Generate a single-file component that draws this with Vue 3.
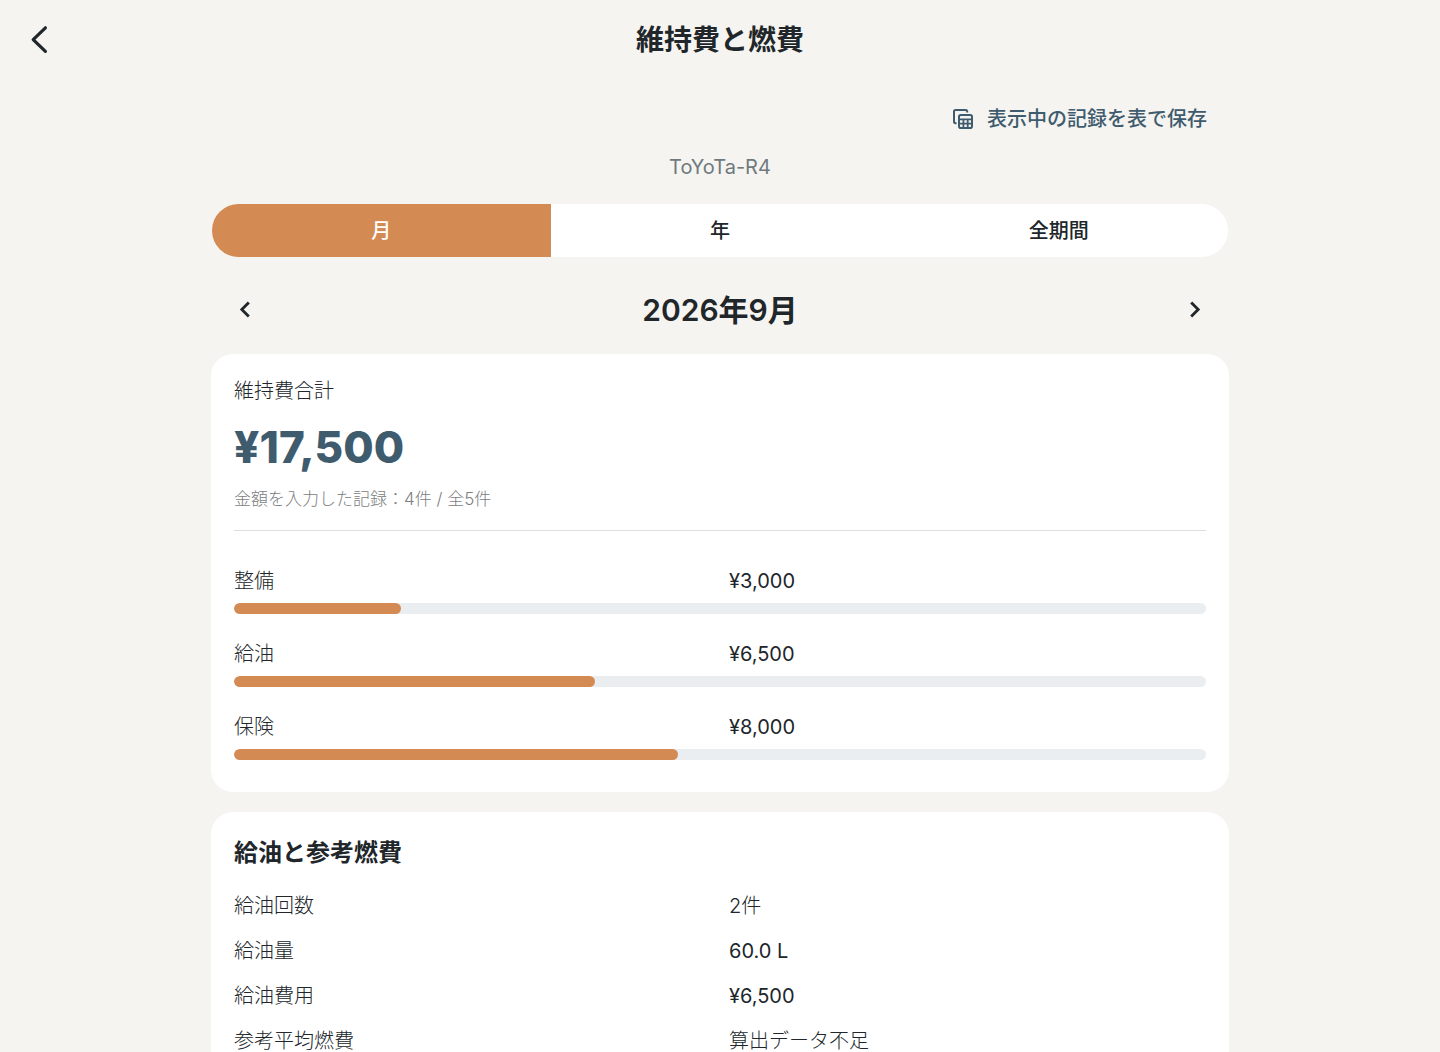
<script setup>
import { ref } from 'vue'

const period = ref('month')
const periods = [
  { id: 'month', label: '月' },
  { id: 'year', label: '年' },
  { id: 'all', label: '全期間' },
]

const total = 17500
const yen = (n) => '¥' + n.toLocaleString('en-US')

const categories = [
  { name: '整備', amount: 3000 },
  { name: '給油', amount: 6500 },
  { name: '保険', amount: 8000 },
]

const fuel = [
  { label: '給油回数', value: '2件' },
  { label: '給油量', value: '60.0 L', numeric: true },
  { label: '給油費用', value: '¥6,500', numeric: true },
  { label: '参考平均燃費', value: '算出データ不足' },
]
</script>

<template>
  <div class="page">
    <header class="bar">
      <button type="button" aria-label="戻る">
        <svg width="40" height="40" viewBox="0 0 40 40" fill="none" stroke="currentColor" stroke-width="3.2" stroke-linecap="round" stroke-linejoin="round">
          <path d="M25.4 7.8 13.2 19.6l12.2 11.8" />
        </svg>
      </button>
      <h1>維持費と燃費</h1>
    </header>

    <div class="scroll">
      <main>
        <div class="export-row">
          <button class="export" type="button">
            <svg width="20" height="20" viewBox="0 0 20 20" fill="none" stroke="currentColor" stroke-width="2" stroke-linejoin="round">
              <path d="M3.6 14.2H2.6Q1 14.2 1 12.6V2.6Q1 1 2.6 1H12.6Q14.2 1 14.2 2.6V3.6" />
              <rect x="6" y="6" width="13" height="13" rx="1.8" />
              <path d="M6 10.4h13M6 14.7h13M10.4 10.4V19M14.7 10.4V19" stroke-width="1.8" />
            </svg>
            <span>表示中の記録を表で保存</span>
          </button>
        </div>

        <p class="vehicle">ToYoTa-R4</p>

        <div class="segments" role="group" aria-label="期間">
          <button
            v-for="p in periods"
            :key="p.id"
            type="button"
            :class="{ active: period === p.id }"
            :aria-pressed="period === p.id"
            @click="period = p.id"
          >{{ p.label }}</button>
        </div>

        <div class="month">
          <button class="step" type="button" aria-label="前の月">
            <svg width="24" height="24" viewBox="0 0 24 24" fill="none" stroke="currentColor" stroke-width="2.8">
              <path d="M15.8 4.6 8.8 11.6l7 7" />
            </svg>
          </button>
          <h2>2026年9月</h2>
          <button class="step" type="button" aria-label="次の月">
            <svg width="24" height="24" viewBox="0 0 24 24" fill="none" stroke="currentColor" stroke-width="2.8">
              <path d="M8.2 4.6l7 7-7 7" />
            </svg>
          </button>
        </div>

        <section class="card">
          <p class="label">維持費合計</p>
          <p class="total">{{ yen(total) }}</p>
          <p class="note">金額を入力した記録：4件 / 全5件</p>
          <hr />
          <ul class="categories">
            <li v-for="c in categories" :key="c.name">
              <div class="pair">
                <span>{{ c.name }}</span>
                <span class="numeric">{{ yen(c.amount) }}</span>
              </div>
              <div class="track">
                <div class="fill" :style="{ width: (c.amount / total) * 100 + '%' }"></div>
              </div>
            </li>
          </ul>
        </section>

        <section class="card">
          <h3>給油と参考燃費</h3>
          <dl>
            <div v-for="f in fuel" :key="f.label" class="pair">
              <dt>{{ f.label }}</dt>
              <dd :class="{ numeric: f.numeric }">{{ f.value }}</dd>
            </div>
          </dl>
        </section>
      </main>
    </div>
  </div>
</template>

<style>
body {
  margin: 0;
  background: #f5f4f0;
}
</style>

<style scoped>
.page {
  display: flex;
  flex-direction: column;
  height: 100vh;
  background: #f5f4f0;
  color: #20262a;
  font-family: Inter, "Noto Sans CJK JP", sans-serif;
  font-size: 20px;
  line-height: 28px;
}
h1, h2, h3, p, ul, dl, dd {
  margin: 0;
  padding: 0;
}
button {
  margin: 0;
  padding: 0;
  border: 0;
  background: none;
  color: inherit;
  font: inherit;
  cursor: pointer;
}
svg {
  display: block;
}
.bar {
  display: grid;
  grid-template-columns: 40px 1fr 40px;
  flex: none;
  align-items: center;
  height: 80px;
  padding: 0 20px;
}
h1 {
  font-size: 28px;
  line-height: 40px;
  font-weight: 600;
  text-align: center;
}
.scroll {
  flex: 1;
  min-height: 0;
  overflow-y: auto;
  scrollbar-width: none;
}
main {
  max-width: 1018px;
  margin: 0 auto;
}
.export-row {
  display: flex;
  justify-content: flex-end;
  padding: 11px 22px 0 0;
}
.export {
  display: flex;
  align-items: center;
  gap: 14px;
  height: 56px;
  color: #3f5b6e;
  font-weight: 500;
}
.vehicle {
  margin-top: 6px;
  color: #6f797e;
  text-align: center;
}
.segments {
  display: grid;
  grid-template-columns: repeat(3, 1fr);
  height: 53px;
  margin: 23px 1px 0;
  border-radius: 27px;
  overflow: hidden;
  background: #fff;
}
.segments button {
  font-weight: 500;
}
.segments .active {
  background: #d48a53;
  color: #fff;
}
.month {
  display: flex;
  align-items: center;
  justify-content: space-between;
  height: 56px;
  margin: 25px 0 16px;
  padding: 0 6px;
}
.step {
  display: grid;
  place-items: center;
  width: 56px;
  height: 56px;
}
h2 {
  font-size: 30px;
  line-height: 40px;
  font-weight: 600;
}
.card {
  margin-bottom: 20px;
  padding: 23px 23px 32px;
  border-radius: 22px;
  background: #fff;
}
.label {
  font-weight: 300;
}
.total {
  margin-top: 12px;
  color: #3f5b6e;
  font-size: 44px;
  line-height: 60px;
  font-weight: 800;
}
.note {
  margin-top: 10px;
  color: #7c8082;
  font-size: 17px;
  line-height: 24px;
  font-weight: 300;
}
hr {
  height: 1px;
  margin: 19px 0 36px;
  border: 0;
  background: #dcdfe1;
}
.categories {
  display: grid;
  gap: 26px;
  list-style: none;
}
.pair {
  display: grid;
  grid-template-columns: 1fr 1fr;
  gap: 18px;
  font-weight: 300;
}
.numeric {
  font-weight: 400;
}
.track {
  height: 11px;
  margin-top: 8px;
  border-radius: 6px;
  overflow: hidden;
  background: #ebeef1;
}
.fill {
  height: 100%;
  border-radius: 6px;
  background: #d48a53;
}
h3 {
  font-size: 24px;
  line-height: 36px;
  font-weight: 600;
}
dl {
  display: grid;
  gap: 17px;
  margin-top: 21px;
}
</style>
